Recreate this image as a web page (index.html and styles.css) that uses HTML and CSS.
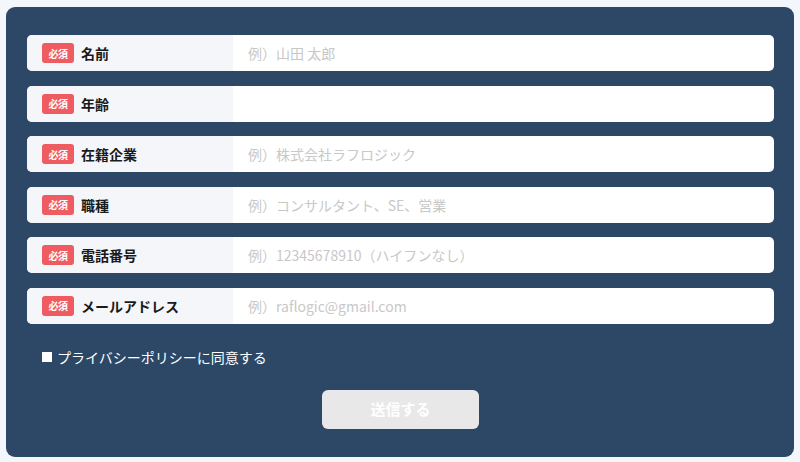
FILE: index.html
```html
<!DOCTYPE html>
<html lang="ja">
<head>
<meta charset="utf-8">
<link rel="stylesheet" href="styles.css">
</head>
<body>
<form class="panel">
  <div class="rows">
    <div class="row"><div class="label"><span class="badge">必須</span><span class="name">名前</span></div><div class="field"><span class="ph">例）山田 太郎</span></div></div>
    <div class="row"><div class="label"><span class="badge">必須</span><span class="name">年齢</span></div><div class="field"><span class="ph"></span></div></div>
    <div class="row"><div class="label"><span class="badge">必須</span><span class="name">在籍企業</span></div><div class="field"><span class="ph">例）株式会社ラフロジック</span></div></div>
    <div class="row"><div class="label"><span class="badge">必須</span><span class="name">職種</span></div><div class="field"><span class="ph">例）コンサルタント、SE、営業</span></div></div>
    <div class="row"><div class="label"><span class="badge">必須</span><span class="name">電話番号</span></div><div class="field"><span class="ph">例）12345678910（ハイフンなし）</span></div></div>
    <div class="row"><div class="label"><span class="badge">必須</span><span class="name">メールアドレス</span></div><div class="field"><span class="ph">例）raflogic@gmail.com</span></div></div>
  </div>
  <label class="agree"><span class="box"></span>プライバシーポリシーに同意する</label>
  <div class="actions"><span class="submit">送信する</span></div>
</form>
</body>
</html>
```
FILE: styles.css
```css
html, body {
  margin: 0;
  padding: 0;
  background: #f3f6fa;
  font-family: "Noto Sans CJK JP", "Noto Sans", sans-serif;
}
body {
  padding: 7px 6px 5px 6px;
}
.panel {
  display: block;
  background: #2c4866;
  border-radius: 9px;
  padding: 28px 20px 28px 21px;
  height: 450px;
  box-sizing: border-box;
}
.rows {
  display: flex;
  flex-direction: column;
  gap: 14.6px;
}
.row {
  display: flex;
  height: 36px;
  border-radius: 5px;
  overflow: hidden;
  background: #fff;
}
.label {
  width: 206px;
  background: #f4f6fa;
  display: flex;
  align-items: center;
  padding-left: 15px;
  box-sizing: border-box;
}
.badge {
  background: #ee5b60;
  color: #fff;
  font-size: 10px;
  font-weight: 700;
  width: 32px;
  height: 20px;
  border-radius: 3px;
  display: flex;
  align-items: center;
  justify-content: center;
  letter-spacing: -0.5px;
  margin-right: 7px;
}
.name {
  font-size: 14px;
  font-weight: 700;
  color: #1a1a1a;
}
.field {
  flex: 1;
  display: flex;
  align-items: center;
  padding-left: 15px;
}
.ph {
  font-size: 14px;
  color: #c8c8c8;
}
.agree {
  display: flex;
  align-items: center;
  margin: 22px 0 0 15px;
  color: #fff;
  font-size: 14px;
  height: 22px;
}
.box {
  width: 10px;
  height: 10px;
  background: #fff;
  margin-right: 5px;
}
.actions {
  display: flex;
  justify-content: center;
  margin-top: 22px;
}
.submit {
  width: 157px;
  height: 39px;
  background: #e8e8e8;
  border-radius: 6px;
  color: #fff;
  font-size: 15px;
  font-weight: 700;
  display: flex;
  align-items: center;
  justify-content: center;
  padding-bottom: 2px;
  box-sizing: border-box;
}
```
